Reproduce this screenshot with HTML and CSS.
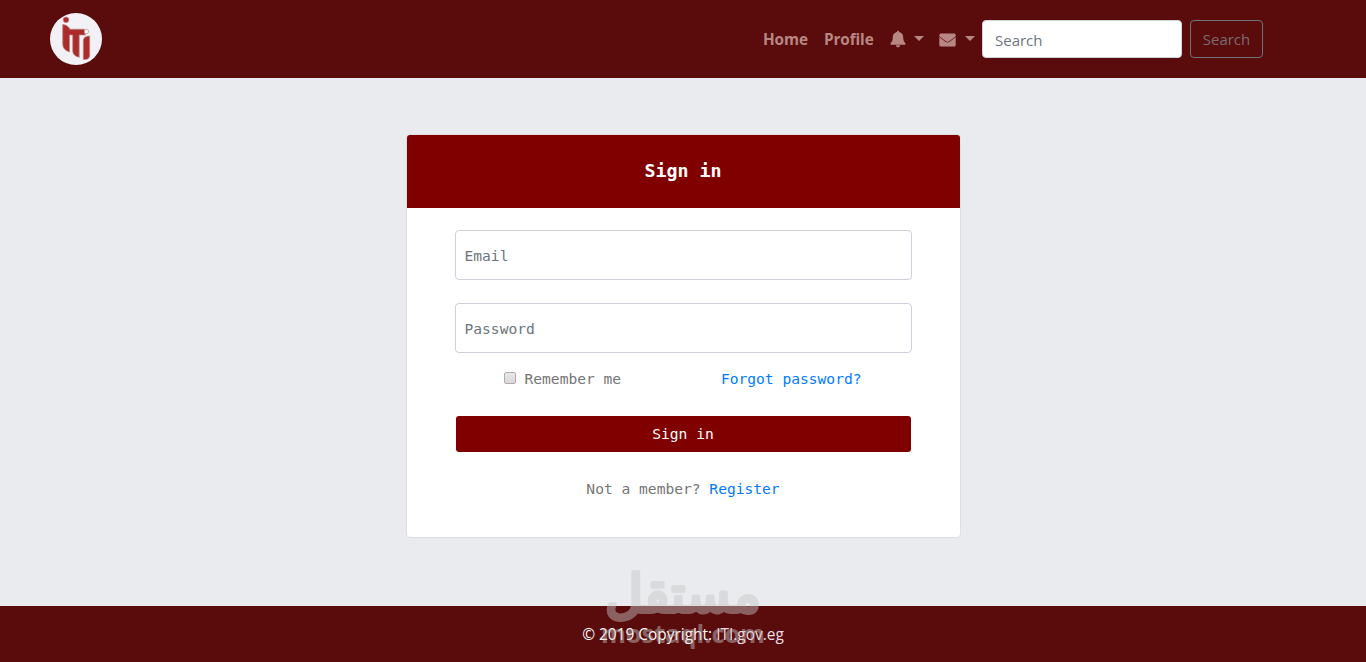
FILE: index.html
```html
<!DOCTYPE html>
<html lang="en">
<head>
<meta charset="utf-8">
<title>Sign in</title>
<link rel="stylesheet" href="styles.css">
</head>
<body>
<header class="navbar">
  <a class="brand" href="#" aria-label="ITI">
    <svg width="52" height="52" viewBox="0 0 52 52">
      <circle cx="26" cy="26" r="26" fill="#f2f1f5"/>
      <g fill="#ac2b2b" stroke="#b98a86" stroke-width=".7">
        <circle cx="16" cy="6.800" r="2.800"/>
        <path d="M12.700 11.500Q16 11 19.500 15V16.200H34.500Q34 20 35.500 22H29.200V44.300Q22.700 43 22.700 38V22H19.500V39Q12.700 37 12.700 31Z"/>
        <path d="M33.300 27Q34 23 39.700 23V43Q39 47 33.300 46.500Z"/>
      </g>
      <rect x="34.500" y="16.500" width="4" height="4" rx="1.500" fill="#fff" stroke="#c58c8c" stroke-width=".7"/>
    </svg>
  </a>
  <nav class="menu">
    <a class="link" href="#">Home</a>
    <a class="link profile" href="#">Profile</a>
    <a class="drop bell" href="#" aria-label="Notifications">
      <svg width="16" height="18" viewBox="0 0 16 18"><path d="M8 .8C7.300.8 7 1.300 7 2.100C4.300 2.600 2.800 4.600 2.800 7.300C2.800 10.500 2 11.600.8 12.900C.1 13.700.5 14.700 1.500 14.700H14.500C15.500 14.700 15.900 13.700 15.200 12.900C14 11.600 13.200 10.500 13.200 7.300C13.200 4.600 11.700 2.600 9 2.100C9 1.300 8.700.8 8 .8ZM5.900 15.300A2.100 2.100 0 0 0 10.100 15.300Z"/></svg>
      <i class="caret"></i>
    </a>
    <a class="drop mail" href="#" aria-label="Messages">
      <svg width="17" height="14" viewBox="0 0 17 14"><path d="M1.800.5H15.200Q16.700.5 16.700 2V3.200L10.200 8.200Q8.500 9.300 6.800 8.200L.3 3.200V2Q.3.500 1.800.5ZM.3 4.100L6.300 8.800Q8.500 10.200 10.700 8.800L16.700 4.100V12Q16.700 13.500 15.200 13.500H1.800Q.3 13.500.3 12Z"/></svg>
      <i class="caret"></i>
    </a>
    <input class="search" type="text" placeholder="Search">
    <button class="search-btn">Search</button>
  </nav>
</header>
<main class="page">
  <section class="card">
    <h5 class="card-title">Sign in</h5>
    <form class="form">
      <input class="field" type="email" placeholder="Email">
      <input class="field" type="password" placeholder="Password">
      <div class="options">
        <label class="remember"><input class="check" type="checkbox"><span>Remember me</span></label>
        <a href="#">Forgot password?</a>
      </div>
      <button class="submit" type="button">Sign in</button>
      <p class="register">Not a member? <a href="#">Register</a></p>
    </form>
  </section>
</main>
<footer class="footer"><span class="copy">© 2019 Copyright: <a class="site" href="#">ITI.gov.eg</a></span></footer>
<svg class="watermark" width="180" height="90" viewBox="0 0 180 90">
  <text class="wm-ar" x="90" y="42" text-anchor="middle" textLength="156" lengthAdjust="spacingAndGlyphs">مستقل</text>
  <text class="wm-en" x="90" y="73" text-anchor="middle" textLength="164" lengthAdjust="spacingAndGlyphs">mostaql.com</text>
</svg>
</body>
</html>
```
FILE: styles.css
```css
* { box-sizing: border-box; }
body {
  margin: 0;
  height: 662px;
  display: flex;
  flex-direction: column;
  position: relative;
  overflow: hidden;
  background: #e9ebee;
  font: 15px/24px "Open Sans", "Noto Sans", sans-serif;
}
a { color: #007bff; text-decoration: none; }
.navbar {
  height: 78px;
  flex: none;
  display: flex;
  align-items: center;
  justify-content: space-between;
  padding: 0 103px 0 50px;
  background: #5a0c0c;
}
.brand, .brand svg { display: block; }
.menu { display: flex; align-items: center; }
.link {
  width: 61px;
  color: #b88784;
  font-weight: 700;
  font-size: 15.3px;
  letter-spacing: -.1px;
}
.profile { width: 66px; }
.drop { display: flex; align-items: center; }
.drop svg { fill: #b88784; }
.bell { width: 49px; gap: 8px; }
.mail { width: 43px; gap: 9px; }
.mail svg { margin-top: 2px; }
.caret {
  border: 5px solid transparent;
  border-top-color: #b88784;
  border-bottom: 0;
  margin-top: -1px;
}
.search {
  width: 200px;
  height: 38px;
  padding: 2px 12px 1px;
  border: 1px solid #ced4da;
  border-radius: 4px;
  background: #fff;
  font: inherit;
}
.search::placeholder, .field::placeholder { color: #6c757d; opacity: 1; }
.search-btn {
  width: 73px;
  height: 38px;
  margin-left: 8px;
  padding: 0;
  border: 1px solid #6c757d;
  border-radius: 4px;
  background: transparent;
  color: #7b6b73;
  font: inherit;
}
.page { flex: 1; padding-top: 56px; }
.card {
  width: 555px;
  height: 404px;
  margin: 0 auto;
  border: 1px solid #dddee1;
  border-radius: 4px;
  background: #fff;
  overflow: hidden;
  font: 14.6px/24px "DejaVu Sans Mono", monospace;
  color: #747678;
}
.card-title {
  height: 73px;
  margin: 0;
  background: maroon;
  color: #fff;
  text-align: center;
  font-size: 18.3px;
  line-height: 71px;
}
.form { display: flex; flex-direction: column; padding: 22px 48px 0; }
.field {
  width: 457px;
  height: 50px;
  margin-bottom: 23px;
  padding: 1px 9px 0;
  border: 1px solid #ced0da;
  border-radius: 4px;
  font: inherit;
}
.options {
  display: flex;
  justify-content: space-between;
  height: 24px;
  margin-top: -9px;
  padding: 0 50px 0 49px;
}
.remember { display: flex; gap: 9px; }
.check {
  appearance: none;
  width: 12px;
  height: 12px;
  margin: 5px 0 0;
  border: 1px solid #b9a9a9;
  border-radius: 2px;
  background: linear-gradient(#e9e9e9, #d8d8d8);
}
.submit {
  width: 455px;
  height: 36px;
  margin: 25px 0 0 1px;
  padding: 0;
  border: 0;
  border-radius: 3px;
  background: maroon;
  color: #fff;
  font: inherit;
}
.register { margin: 25px 0 0; text-align: center; }
.footer {
  height: 56px;
  flex: none;
  padding-top: 16px;
  background: #5a0c0c;
  color: #fff;
  font-size: 15.45px;
  text-align: center;
}
.site { color: #e8dfe5; }
.watermark {
  position: absolute;
  left: 593px;
  top: 570px;
  overflow: visible;
  fill: #c6c6c6;
  stroke: #c6c6c6;
  opacity: .45;
  pointer-events: none;
}
.wm-ar { font: 52px "DejaVu Sans", sans-serif; stroke-width: 4px; stroke-linejoin: round; }
.wm-en { font: bold 25px "Open Sans", sans-serif; stroke: none; }
```
